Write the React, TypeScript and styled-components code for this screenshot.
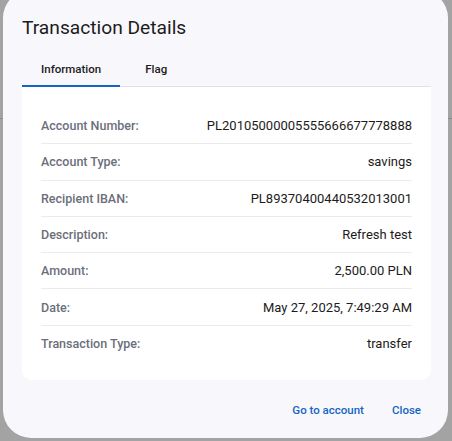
import React from "react";
import styled, { createGlobalStyle } from "styled-components";

const Global = createGlobalStyle`
  html, body { margin: 0; padding: 0; }
  body { font-family: Roboto, "Noto Sans", sans-serif; }
`;

const Backdrop = styled.div`
  width: 452px;
  height: 441px;
  overflow: hidden;
  background:
    linear-gradient(#8a8a8a, #8a8a8a) 0 118px / 100% 1px no-repeat,
    #a3a3a3;
  display: flex;
  align-items: flex-start;
  padding-left: 3px;
  box-sizing: border-box;
`;

const Dialog = styled.div`
  margin-top: -10px;
  width: 445px;
  height: 448px;
  box-sizing: border-box;
  background: #f8f8fc;
  border-radius: 28px;
  padding: 26px 17px 0 19px;
  display: flex;
  flex-direction: column;
`;

const Title = styled.h2`
  margin: 0;
  font-size: 19.2px;
  font-weight: 400;
  color: #1d1b20;
  line-height: 24px;
`;

const Tabs = styled.div`
  margin-top: 11px;
  display: flex;
  border-bottom: 1px solid #e0e0e6;
`;

const Tab = styled.div<{ $active?: boolean }>`
  height: 36px;
  min-width: 72px;
  padding: 0 19px;
  box-sizing: border-box;
  display: flex;
  align-items: center;
  justify-content: center;
  font-size: 11.5px;
  font-weight: 500;
  color: #1d1b20;
  box-shadow: ${(p) => (p.$active ? "inset 0 -2px 0 #1565c0" : "none")};
  margin-bottom: -1px;
`;

const Card = styled.div`
  background: #fff;
  border-radius: 0 0 10px 10px;
  padding: 21px 19px 18px;
`;

const Row = styled.div<{ $last?: boolean }>`
  height: 36.3px;
  display: flex;
  align-items: center;
  justify-content: space-between;
  border-bottom: ${(p) => (p.$last ? "none" : "1px solid #ebebeb")};
  box-sizing: border-box;
`;

const Label = styled.span`
  font-size: 12.5px;
  font-weight: 500;
  color: #6b6f7a;
`;

const Value = styled.span`
  font-size: 13px;
  color: #1d1b20;
`;

const Actions = styled.div`
  display: flex;
  justify-content: flex-end;
  gap: 4px;
  margin-top: 15px;
  margin-right: -2px;
`;

const TextButton = styled.button`
  background: none;
  border: none;
  font-family: Roboto, sans-serif;
  font-size: 11.5px;
  font-weight: 500;
  color: #1565c0;
  padding: 8px 12px;
  cursor: pointer;
`;

const rows: [string, string][] = [
  ["Account Number:", "PL20105000005555666677778888"],
  ["Account Type:", "savings"],
  ["Recipient IBAN:", "PL89370400440532013001"],
  ["Description:", "Refresh test"],
  ["Amount:", "2,500.00 PLN"],
  ["Date:", "May 27, 2025, 7:49:29 AM"],
  ["Transaction Type:", "transfer"],
];

export default function App() {
  return (
    <>
      <Global />
      <Backdrop>
        <Dialog>
          <Title>Transaction Details</Title>
          <Tabs>
            <Tab $active>Information</Tab>
            <Tab>Flag</Tab>
          </Tabs>
          <Card>
            {rows.map(([l, v], i) => (
              <Row key={l} $last={i === rows.length - 1}>
                <Label>{l}</Label>
                <Value>{v}</Value>
              </Row>
            ))}
          </Card>
          <Actions>
            <TextButton>Go to account</TextButton>
            <TextButton>Close</TextButton>
          </Actions>
        </Dialog>
      </Backdrop>
    </>
  );
}
